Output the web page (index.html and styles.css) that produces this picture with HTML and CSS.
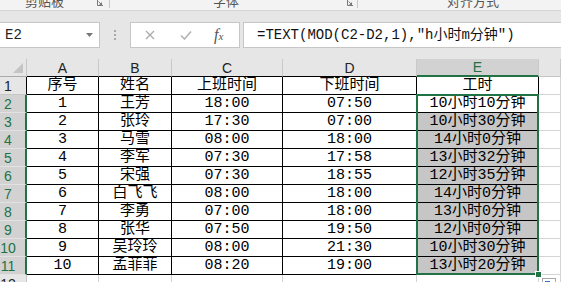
FILE: index.html
```html
<!DOCTYPE html>
<html lang="zh-CN">
<head>
<meta charset="utf-8">
<title>工时</title>
<link rel="stylesheet" href="styles.css">
</head>
<body>
<div class="screen">
  <div class="ribbon">
    <div class="rgroup g1"><span class="rlabel">剪贴板</span>
      <svg class="launch" width="6" height="6" viewBox="0 0 6 6"><path d="M0.5 0v5.5H6M1.5 1.5l3.5 3.5M2.5 4.5h2v-2" fill="none" stroke="#7a7a7a" stroke-width="1"/></svg></div>
    <div class="rgroup g2"><span class="rlabel">字体</span>
      <svg class="launch" width="6" height="6" viewBox="0 0 6 6"><path d="M0.5 0v5.5H6M1.5 1.5l3.5 3.5M2.5 4.5h2v-2" fill="none" stroke="#7a7a7a" stroke-width="1"/></svg></div>
    <div class="rgroup g3"><span class="rlabel">对齐方式</span></div>
  </div>

  <div class="fbar">
    <div class="namebox"><span>E2</span>
      <svg class="nb-arrow" width="7" height="4" viewBox="0 0 7 4"><path d="M0 0h7L3.5 4z" fill="#777"/></svg></div>
    <div class="grip"><i></i><i></i><i></i></div>
    <div class="fbtns">
      <svg class="b-x" width="10" height="10" viewBox="0 0 10 10"><path d="M1 1l8 8M9 1l-8 8" stroke="#ababab" stroke-width="1.3" fill="none"/></svg>
      <svg class="b-ok" width="12" height="10" viewBox="0 0 12 10"><path d="M1 5.5l3.5 3.5L11 1.5" stroke="#b3b3b3" stroke-width="1.6" fill="none"/></svg>
      <span class="fx"><i>f</i><i class="x">x</i></span>
    </div>
    <div class="finput">=TEXT(MOD(C2-D2,1),"h小时m分钟")</div>
  </div>

  <div class="sheet">
    <div class="corner"><svg width="27" height="18" viewBox="0 0 27 18"><path d="M23 4v10H13z" fill="#c4c4c4"/></svg></div>
    <div class="ch">A</div><div class="ch">B</div><div class="ch">C</div><div class="ch">D</div><div class="ch sel">E</div><div class="ch f"></div>

    <div class="rh">1</div><div class="c">序号</div><div class="c">姓名</div><div class="c">上班时间</div><div class="c">下班时间</div><div class="c">工时</div><div class="g"></div>
    <div class="rh sel">2</div><div class="c">1</div><div class="c">王芳</div><div class="c">18:00</div><div class="c">07:50</div><div class="c">10小时10分钟</div><div class="g"></div>
    <div class="rh sel">3</div><div class="c">2</div><div class="c">张玲</div><div class="c">17:30</div><div class="c">07:00</div><div class="c sh">10小时30分钟</div><div class="g"></div>
    <div class="rh sel">4</div><div class="c">3</div><div class="c">马雪</div><div class="c">08:00</div><div class="c">18:00</div><div class="c sh">14小时0分钟</div><div class="g"></div>
    <div class="rh sel">5</div><div class="c">4</div><div class="c">李军</div><div class="c">07:30</div><div class="c">17:58</div><div class="c sh">13小时32分钟</div><div class="g"></div>
    <div class="rh sel">6</div><div class="c">5</div><div class="c">宋强</div><div class="c">07:30</div><div class="c">18:55</div><div class="c sh">12小时35分钟</div><div class="g"></div>
    <div class="rh sel">7</div><div class="c">6</div><div class="c">白飞飞</div><div class="c">08:00</div><div class="c">18:00</div><div class="c sh">14小时0分钟</div><div class="g"></div>
    <div class="rh sel">8</div><div class="c">7</div><div class="c">李勇</div><div class="c">07:00</div><div class="c">18:00</div><div class="c sh">13小时0分钟</div><div class="g"></div>
    <div class="rh sel">9</div><div class="c">8</div><div class="c">张华</div><div class="c">07:50</div><div class="c">19:50</div><div class="c sh">12小时0分钟</div><div class="g"></div>
    <div class="rh sel">10</div><div class="c">9</div><div class="c">吴玲玲</div><div class="c">08:00</div><div class="c">21:30</div><div class="c sh">10小时30分钟</div><div class="g"></div>
    <div class="rh sel">11</div><div class="c">10</div><div class="c">孟菲菲</div><div class="c">08:20</div><div class="c">19:00</div><div class="c sh">13小时20分钟</div><div class="g"></div>
    <div class="rh last">12</div><div class="g"></div><div class="g"></div><div class="g"></div><div class="g"></div><div class="g"></div><div class="g"></div>

    <div class="selection"></div>
    <div class="handle"></div>
    <div class="qa"><span></span></div>
  </div>
</div>
</body>
</html>
```

FILE: styles.css
```css
* { box-sizing: border-box; }
body { margin: 0; background: #fff; }
.screen {
  width: 561px; height: 282px; overflow: hidden;
  font-family: "Liberation Sans", "Noto Sans CJK SC", sans-serif;
  background: #fff;
}

/* ribbon strip */
.ribbon {
  display: flex; height: 11px; overflow: hidden;
  background: #f3f3f3; border-bottom: 1px solid #d5d5d5;
}
.rgroup { display: flex; align-items: flex-start; height: 8px; border-right: 1px solid #c8c8c8; }
.g1 { width: 110px; }
.g2 { width: 248px; }
.g3 { flex: 1; border-right: none; }
.rlabel {
  font-family: "Noto Sans CJK SC", sans-serif; font-size: 13px; line-height: 18px;
  margin-top: -8px; color: #555; white-space: nowrap;
}
.g1 .rlabel { padding-left: 25px; }
.g2 .rlabel { padding-left: 103px; }
.g3 .rlabel { padding-left: 89px; }
.launch { margin-left: auto; }
.g1 .launch { margin-right: 6px; }
.g2 .launch { margin-right: 4px; }

/* formula bar */
.fbar {
  display: flex; align-items: flex-start; height: 48px; padding-top: 11px;
  background: #e6e6e6;
}
.namebox {
  width: 100px; height: 26px; display: flex; align-items: center;
  background: #fff; border: 1px solid #c6c6c6; border-left: 0; padding-left: 5px;
  font-family: "Liberation Mono", monospace; font-size: 14px; color: #222;
}
.nb-arrow { margin-left: auto; margin-right: 6px; }
.grip {
  width: 30px; height: 26px; display: flex; flex-direction: column;
  align-items: center; justify-content: center; gap: 2px;
}
.grip i { width: 2px; height: 2px; background: #a8a8a8; }
.fbtns {
  width: 110px; height: 26px; display: flex; align-items: center;
  background: #fff; border: 1px solid #c6c6c6;
}
.b-x { margin-left: 14px; }
.b-ok { margin-left: 25px; }
.fx {
  margin-left: 22px; font-family: "Liberation Serif", serif; font-size: 16px; color: #555;
  line-height: 1;
}
.fx .x { font-size: 11px; }
.finput {
  flex: 1; height: 26px; margin-left: 3px; padding-left: 13px;
  background: #fff; border: 1px solid #c6c6c6; border-right: 0;
  font-family: "Liberation Mono", "Noto Sans CJK SC", monospace; font-size: 14px;
  line-height: 24px; color: #111; white-space: nowrap; overflow: hidden;
}

/* sheet */
.sheet {
  position: relative;
  display: grid;
  grid-template-columns: 27px 72px 73px 111px 134px 122px 22px;
  grid-template-rows: repeat(13, 18px);
}
.sheet > div { overflow: hidden; white-space: nowrap; }
.corner { background: #e6e6e6; border-right: 1px solid #c6c6c6; border-bottom: 1px solid #ababab; }
.corner svg { display: block; }
.ch, .rh {
  display: flex; align-items: center; justify-content: center;
  background: #e6e6e6; color: #222;
  font-family: "Liberation Sans", sans-serif; font-size: 14px;
}
.ch { border-right: 1px solid #c9c9c9; border-bottom: 1px solid #000; }
.ch.sel { background: #d2d2d2; color: #217346; border-bottom: 2px solid #217346; }
.ch.f { border-bottom: 1px solid #c6c6c6; }
.rh { padding-right: 10px; border-right: 1px solid #000; border-bottom: 1px solid #c6c6c6; }
.rh.sel { background: #d2d2d2; color: #217346; border-right: 2px solid #217346; border-bottom-color: #e2e2e2; padding-right: 9px; }
.rh.last { border-right-color: #c6c6c6; border-bottom: 0; }
.c, .g {
  display: flex; align-items: center; justify-content: center;
  font-family: "Liberation Mono", "Noto Sans CJK SC", monospace; font-size: 15px;
  line-height: 17px; color: #000;
}
.c { border-right: 1px solid #000; border-bottom: 1px solid #000; }
.c.sh { background: #c6c6c6; }
.g { border-right: 1px solid #d4d4d4; border-bottom: 1px solid #d4d4d4; }

.selection {
  position: absolute; left: 416px; top: 35px; width: 123px; height: 181px;
  border: 2px solid #217346; pointer-events: none;
}
.handle {
  position: absolute; left: 535px; top: 212px; width: 7px; height: 7px;
  background: #217346; border: 1px solid #fff;
}
.qa {
  position: absolute; left: 542px; top: 219px; width: 14px; height: 11px;
  background: #fff; border: 1px solid #a8a8a8;
}
.qa span {
  position: absolute; left: 2px; top: 2px; width: 5px; height: 5px; background: #2e75c9;
}
```
